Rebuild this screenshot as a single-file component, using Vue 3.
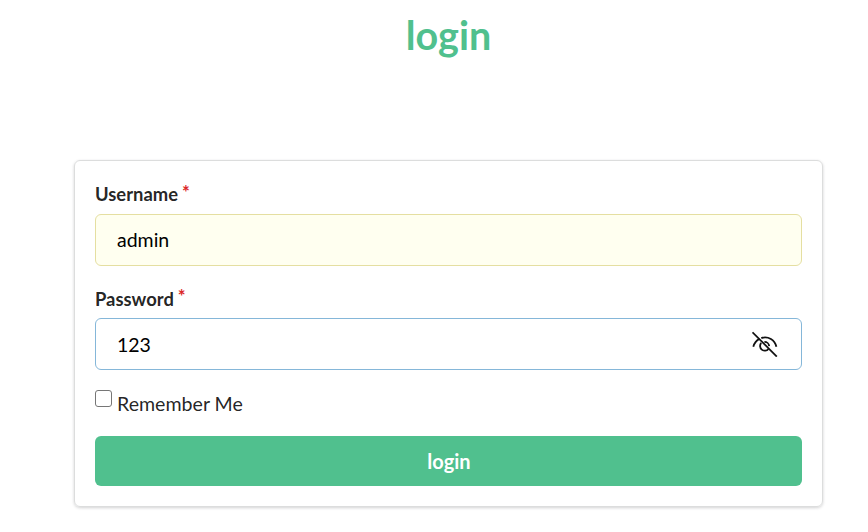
<script setup>
import { ref } from 'vue'

const username = ref('admin')
const password = ref('123')
const remember = ref(false)
</script>

<template>
  <main class="page">
    <h1 class="title">login</h1>
    <form class="card" @submit.prevent>
      <div class="field">
        <label class="label" for="username">Username<span class="star">*</span></label>
        <div class="control filled">
          <input id="username" v-model="username" class="input" type="text" />
        </div>
      </div>
      <div class="field">
        <label class="label" for="password">Password<span class="star">*</span></label>
        <div class="control active">
          <input id="password" v-model="password" class="input" type="text" />
          <svg class="eye" viewBox="0 0 26 26" fill="none" stroke="currentColor" stroke-width="1.8">
            <path d="M0.5 1.3 24.8 25.6" />
            <path d="M1.3 15.8C2.2 12.4 4.3 9.5 7.4 7.9" />
            <path d="M9.2 7C16.4 5 22.8 8.8 24.4 15.8" />
            <path d="M9.2 11.9A4.7 4.7 0 1 0 16.5 18" />
            <path d="M12.4 10.9A4.7 4.7 0 0 1 17.2 15.2" />
          </svg>
        </div>
      </div>
      <label class="remember">
        <input v-model="remember" class="check" type="checkbox" />
        <span class="remember-text">Remember Me</span>
      </label>
      <button class="submit" type="submit">login</button>
    </form>
  </main>
</template>

<style>
body {
  margin: 0;
  background: #fff;
}
</style>

<style scoped>
.page {
  box-sizing: border-box;
  height: 532px;
  padding: 10px 45px 0 74px;
  font-family: Lato, "Liberation Sans", sans-serif;
  color: rgba(0, 0, 0, 0.87);
}
.title {
  margin: 0 0 100px;
  font-size: 39.5px;
  line-height: 50px;
  font-weight: 700;
  text-align: center;
  color: #50c08e;
}
.card {
  box-sizing: border-box;
  height: 347px;
  padding: 20px;
  border: 1px solid #dcdddd;
  border-radius: 6px;
  box-shadow: 0 1px 3px rgba(34, 36, 38, 0.2);
}
.field {
  margin-bottom: 19px;
}
.label {
  display: flex;
  height: 27px;
  margin-bottom: 6px;
  font-size: 18.4px;
  line-height: 27px;
  font-weight: 700;
}
.field + .field .label {
  line-height: 29px;
}
.label .star {
  margin-left: 4px;
  line-height: 22px;
  color: #db2828;
}
.control {
  box-sizing: border-box;
  display: flex;
  align-items: center;
  height: 52px;
  padding: 0 23px 0 21px;
  border: 1px solid #85b7d9;
  border-radius: 6px;
}
.filled {
  background: #fffff0;
  border-color: #e5dfa1;
}
.input {
  flex: 1;
  min-width: 0;
  padding: 0;
  border: 0;
  outline: 0;
  background: transparent;
  font: 400 19.5px/28px Lato, "Liberation Sans", sans-serif;
  color: #000;
}
.active .input {
  padding-top: 2px;
}
.eye {
  width: 26px;
  height: 26px;
  color: #111;
}
.remember {
  display: flex;
  align-items: flex-start;
  height: 28px;
  margin-bottom: 19px;
  font-size: 19.6px;
  line-height: 30px;
}
.check {
  appearance: none;
  box-sizing: border-box;
  width: 17px;
  height: 17px;
  margin: 1px 5px 0 0;
  border: 1.4px solid #767676;
  border-radius: 3px;
  background: #fff;
}
.submit {
  display: block;
  width: 100%;
  height: 50px;
  padding: 0 0 0 1px;
  border: 0;
  border-radius: 6px;
  background: #50c08e;
  color: #fff;
  font: 700 20px/50px Lato, "Liberation Sans", sans-serif;
}
</style>
